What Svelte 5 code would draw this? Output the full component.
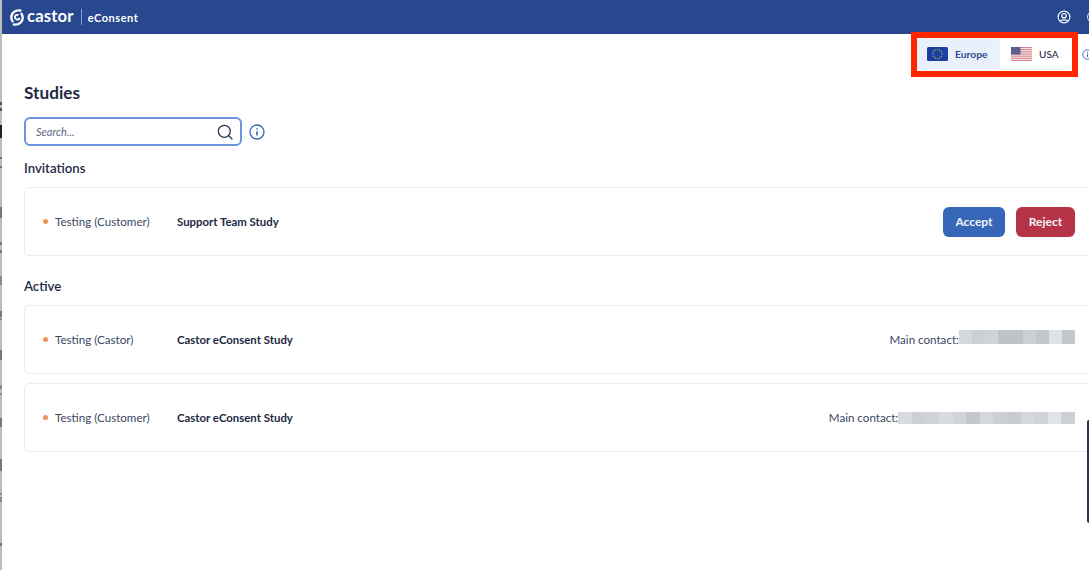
<script>
    const invitations = [
        { env: "Testing (Customer)", name: "Support Team Study" }
    ];
    const active = [
        { env: "Testing (Castor)", name: "Castor eConsent Study", cell: 12.9, tall: 14, lift: 6, blur: [212, 204, 208, 191, 191, 204, 196, 222, 196] },
        { env: "Testing (Customer)", name: "Castor eConsent Study", cell: 13.6, tall: 12, lift: 0, blur: [216, 204, 208, 216, 208, 196, 212, 204, 200, 212, 208, 224, 204] }
    ];
    // bits of the window behind, showing at the far left
    const edgeMarks = [
        [102, 3, "#555"], [108, 3, "#555"], [125, 13, "#222"], [157, 2, "#777"], [166, 2, "#777"],
        [207, 11, "#777"], [242, 3, "#777"], [250, 3, "#777"], [276, 9, "#888"], [311, 6, "#777"],
        [318, 2, "#888"], [350, 10, "#777"], [385, 4, "#888"], [393, 2, "#888"], [418, 9, "#777"],
        [459, 12, "#777"], [493, 2, "#888"], [497, 5, "#888"], [543, 3, "#777"]
    ];
    const euStars = Array.from({ length: 12 }, (_, i) => ({
        x: 10.5 + 4.6 * Math.sin((i * Math.PI) / 6),
        y: 7 - 4.6 * Math.cos((i * Math.PI) / 6)
    }));
    const usStripes = [0, 1, 2, 3, 4, 5, 6];
</script>

<div class="window">
    <div class="edge">
        {#each edgeMarks as m}
            <span class="mark" style="top: {m[0]}px; height: {m[1]}px; background: {m[2]}"></span>
        {/each}
    </div>

    <div class="page">
        <header class="topbar">
            <div class="brand">
                <svg class="logo" viewBox="0 0 14 17" width="14" height="17" fill="none" stroke="#fff" stroke-linecap="round">
                    <path d="M10.4 1.5 C5.6 0.8 1.2 3.4 1.3 8.6 C1.3 10.2 1.8 11.4 2.6 12.4" stroke-width="2.3" />
                    <path d="M3.8 15.5 C8.4 16.2 12.8 13.6 12.7 8.6 C12.7 7 12.2 5.8 11.4 4.8" stroke-width="2.3" />
                    <path d="M9.3 9.6 C8.6 11.2 5 11 4.9 8.2 C4.9 6.6 6.2 5.6 7.8 5.9" stroke-width="1.9" />
                </svg>
                <span class="wordmark">castor</span>
                <span class="divider"></span>
                <span class="product">eConsent</span>
            </div>
            <svg class="user" viewBox="0 0 14 14" width="14" height="14" fill="none" stroke="#fff" stroke-width="1.2">
                <circle cx="7" cy="7" r="5.9" />
                <circle cx="7" cy="5.7" r="2.2" />
                <path d="M3.2 11.2 C4 9.4 10 9.4 10.8 11.2" />
            </svg>
            <span class="menu-circle"></span>
        </header>

        <div class="regions">
            <div class="tabs">
                <div class="tab selected">
                    <svg viewBox="0 0 21 14" width="21" height="14">
                        <rect width="21" height="14" rx="1.5" fill="#1c3fa3" />
                        {#each euStars as s}
                            <circle cx={s.x} cy={s.y} r="0.65" fill="#c9b93f" />
                        {/each}
                    </svg>
                    <span>Europe</span>
                </div>
                <div class="tab">
                    <svg viewBox="0 0 21 14" width="21" height="14">
                        <rect width="21" height="14" rx="1" fill="#f9eeee" />
                        {#each usStripes as i}
                            <rect y={i * 2.15} width="21" height="1.1" fill="#d8818a" />
                        {/each}
                        <rect width="9.5" height="7.5" fill="#5b5f8c" />
                    </svg>
                    <span>USA</span>
                </div>
            </div>
            <svg class="info cut" viewBox="0 0 14 14" width="11" height="11" fill="none" stroke="#3566b8">
                <circle cx="7" cy="7" r="6" stroke-width="1.2" />
                <path d="M7 6.2 V10.2 M7 3.6 V4.8" stroke-width="1.4" />
            </svg>
        </div>

        <main class="content">
            <h1>Studies</h1>
            <div class="search-row">
                <div class="search">
                    <span class="placeholder">Search...</span>
                    <svg viewBox="0 0 16 16" width="16" height="16" fill="none" stroke="#2c3a55" stroke-width="1.3">
                        <circle cx="7.3" cy="7.3" r="6" />
                        <path d="M11.7 11.7 L15 15" stroke-linecap="round" />
                    </svg>
                </div>
                <svg class="info" viewBox="0 0 16 16" width="16" height="16" fill="none" stroke="#3566b8">
                    <circle cx="8" cy="8" r="7" stroke-width="1.3" />
                    <path d="M8 7.2 V11.6 M8 4.2 V5.6" stroke-width="1.6" />
                </svg>
            </div>

            <h2 class="first">Invitations</h2>
            {#each invitations as study}
                <div class="card">
                    <span class="dot"></span>
                    <span class="env">{study.env}</span>
                    <span class="name">{study.name}</span>
                    <div class="actions">
                        <button class="accept">Accept</button>
                        <button class="reject">Reject</button>
                    </div>
                </div>
            {/each}

            <h2 class="second">Active</h2>
            <div class="list">
                {#each active as study}
                    <div class="card">
                        <span class="dot"></span>
                        <span class="env">{study.env}</span>
                        <span class="name">{study.name}</span>
                        <div class="contact">
                            <span>Main contact:</span>
                            <span class="blurred" style="height: {study.tall}px; margin-bottom: {study.lift}px">
                                {#each study.blur as shade}
                                    <i style="width: {study.cell}px; background: rgb({shade}, {shade + 3}, {shade + 8})"></i>
                                {/each}
                            </span>
                        </div>
                    </div>
                {/each}
            </div>
        </main>
    </div>

    <div class="highlight"></div>
    <div class="side-bar"></div>
</div>

<style>
    :global(body) {
        margin: 0;
        background: #fff;
        overflow: hidden;
    }

    .window {
        position: relative;
        display: flex;
        width: 1089px;
        height: 570px;
        overflow: hidden;
        font-family: Lato, "Liberation Sans", sans-serif;
        color: #1e2a44;
    }

    .edge {
        position: relative;
        flex: 0 0 2px;
        background: #bdbdbd;
    }

    .mark {
        position: absolute;
        left: 0;
        width: 2px;
    }

    .page {
        flex: 1;
        min-width: 0;
    }

    .topbar {
        display: flex;
        align-items: center;
        height: 34px;
        padding-left: 8px;
        background: #27488f;
        color: #fff;
    }

    .brand {
        display: flex;
        align-items: center;
        flex: 1;
    }

    .logo {
        margin-right: 3px;
    }

    .wordmark {
        font-size: 16.6px;
        font-weight: 700;
        letter-spacing: 0.2px;
        line-height: 1;
        margin-bottom: 2px;
    }

    .divider {
        width: 1px;
        height: 16px;
        margin: 0 6px 0 7px;
        background: #7fa2de;
    }

    .product {
        font-size: 11px;
        font-weight: 700;
        letter-spacing: 0.5px;
    }

    .user {
        margin-right: 16px;
    }

    .menu-circle {
        flex: 0 0 14px;
        height: 12px;
        box-sizing: border-box;
        margin-right: -12px;
        border: 1.5px solid #d8e0ee;
        border-radius: 50%;
    }

    .regions {
        display: flex;
        justify-content: flex-end;
        align-items: center;
        height: 30px;
        margin-top: 5px;
        margin-right: -4px;
    }

    .tabs {
        display: flex;
        height: 30px;
        border-radius: 2px;
        box-shadow: 0 0 2px #dfe3ea;
    }

    .tab {
        display: flex;
        align-items: center;
        gap: 7px;
        box-sizing: border-box;
        width: 73px;
        padding-left: 11px;
        font-size: 10px;
        font-weight: 500;
        color: #1e2a44;
    }

    .tab.selected {
        width: 82px;
        padding-left: 10px;
        background: #e8f0fb;
        color: #33498a;
        font-size: 10.3px;
        font-weight: 700;
    }

    .tab.selected + .tab {
        border-left: 1px solid #eef1f6;
    }

    .info.cut {
        margin-left: 10px;
        flex: none;
    }

    .content {
        padding: 0 0 0 22px;
    }

    h1 {
        margin: 13px 0 0;
        font-size: 17.2px;
        line-height: 22px;
        font-weight: 700;
    }

    .search-row {
        display: flex;
        align-items: center;
        gap: 7px;
        margin-top: 13px;
    }

    .search {
        display: flex;
        align-items: center;
        justify-content: space-between;
        box-sizing: border-box;
        width: 218px;
        height: 29px;
        padding: 0 7px 0 10px;
        border: 2px solid #6b94da;
        border-radius: 6px;
    }

    .placeholder {
        font-size: 11px;
        font-style: italic;
        color: #5c6880;
    }

    h2 {
        margin: 0;
        font-size: 13.2px;
        line-height: 18px;
        font-weight: 600;
    }

    h2.first {
        margin-top: 13px;
        margin-bottom: 10px;
    }

    h2.second {
        margin-top: 21px;
        margin-bottom: 10px;
    }

    .list {
        display: flex;
        flex-direction: column;
        gap: 9px;
    }

    .card {
        display: flex;
        align-items: center;
        box-sizing: border-box;
        height: 69px;
        margin-right: -5px;
        padding: 0 18px;
        border: 1px solid #e9ecf3;
        border-radius: 5px;
        font-size: 11.6px;
    }

    .dot {
        flex: none;
        width: 5px;
        height: 5px;
        margin-right: 7px;
        border-radius: 50%;
        background: #f0915a;
    }

    .env {
        width: 122px;
        color: #3b4763;
    }

    .name {
        font-weight: 700;
        font-size: 11.4px;
        color: #1e2a44;
    }

    .actions {
        display: flex;
        gap: 11px;
        margin-left: auto;
    }

    button {
        height: 30px;
        padding: 0;
        border: none;
        border-radius: 6px;
        font-family: inherit;
        font-size: 12px;
        font-weight: 700;
        color: #f2f5fb;
    }

    .accept {
        width: 62px;
        background: #3566b8;
    }

    .reject {
        width: 59px;
        background: #b63246;
    }

    .contact {
        display: flex;
        align-items: center;
        margin-left: auto;
        color: #3b4763;
    }

    .blurred {
        display: flex;
    }

    .highlight {
        position: absolute;
        left: 911px;
        top: 32px;
        width: 167px;
        height: 45px;
        box-sizing: border-box;
        border: 6px solid #ff2600;
    }

    .side-bar {
        position: absolute;
        left: 1087px;
        top: 420px;
        width: 2px;
        height: 103px;
        background: #1f3a5a;
        border-radius: 2px 0 0 2px;
    }
</style>
